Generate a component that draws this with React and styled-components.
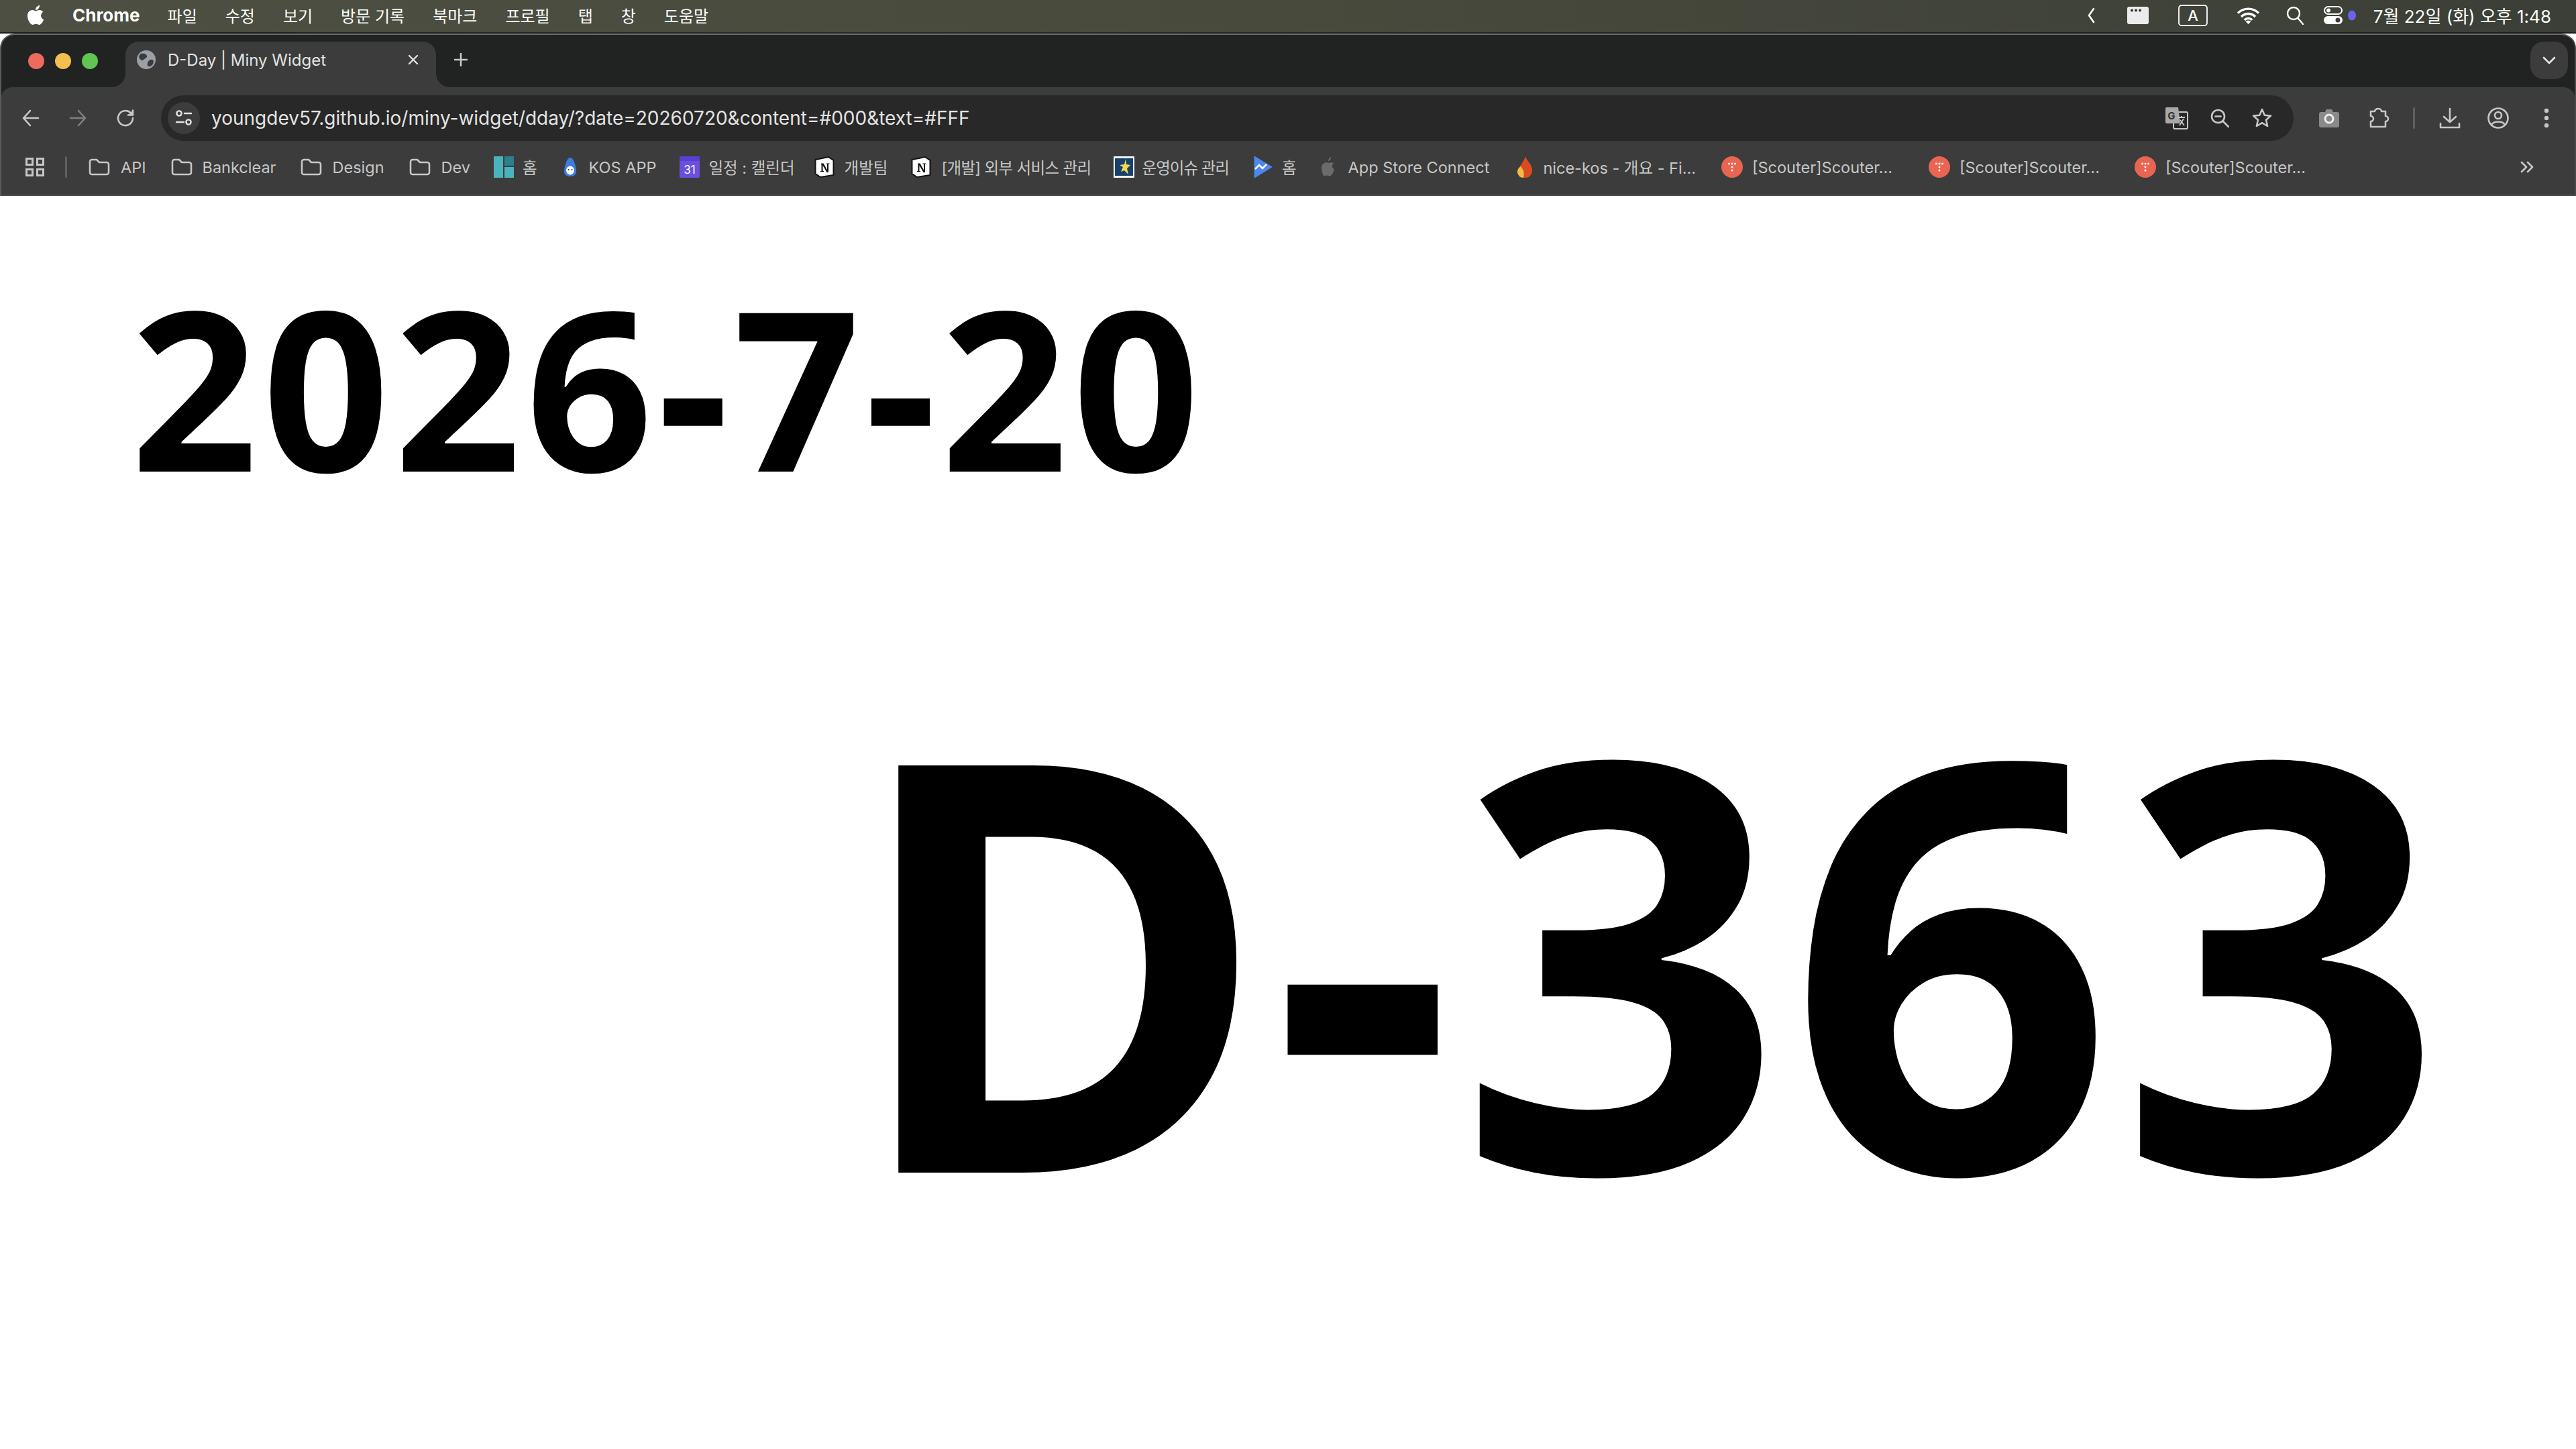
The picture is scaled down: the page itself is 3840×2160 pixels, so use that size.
import React from "react";
import styled, { createGlobalStyle } from "styled-components";
import { FaApple } from "react-icons/fa";

const Global = createGlobalStyle`
  html, body { margin: 0; padding: 0; background: #fff; }
  body { width: 3840px; height: 2160px; overflow: hidden; font-family: Inter, "Noto Sans CJK KR", sans-serif; }
`;
const UI = `Inter, "Noto Sans CJK KR", sans-serif`;

const Screen = styled.div`
  width: 3840px; height: 2160px; display: flex; flex-direction: column; overflow: hidden;
  background: linear-gradient(90deg, #1c1d18, #2a2a22 30%, #1d1c18);
`;
const MenuBar = styled.header`
  height: 48px; flex: none; display: flex; align-items: center; color: #fff; box-sizing: border-box;
  background: linear-gradient(90deg, #4c4f41 0%, #484a3c 50%, #3c3f37 100%);
  font: 400 24px ${UI}; padding: 0 37px 3px 39px;
`;
const AppleMark = styled.span`display: flex; width: 28px; margin-right: 41px; font-size: 33px; margin-top: -1px;`;
const AppName = styled.span`font-weight: 700; font-size: 26px; margin-right: 41px;`;
const MenuItem = styled.span`margin-right: 42px;`;
const Spacer = styled.div`flex: 1;`;
const Status = styled.span`display: flex; align-items: center; margin-left: ${p => p.$gap}px;`;
const Clock = styled.span`margin-left: 26px; font-size: 26px; white-space: nowrap;`;

const Browser = styled.div`
  flex: 1; margin-top: 2px; display: flex; flex-direction: column; min-height: 0; background: #fff;
`;
const Chrome = styled.div`
  flex: none; background: #202322; border-radius: 22px 22px 0 0; overflow: hidden;
  border-top: 2px solid #6a6c6b; border-left: 2px solid #5a5a5a; border-right: 2px solid #4a4a4a;
`;
const TabStrip = styled.div`height: 78px; display: flex; align-items: flex-end; padding-left: 40px; padding-right: 10px;`;
const Lights = styled.div`display: flex; gap: 16px; align-self: flex-start; margin-top: 27px;`;
const Light = styled.i`display: block; width: 24px; height: 24px; border-radius: 50%; background: ${p => p.$c};`;
const Tab = styled.div`
  margin-left: 41px; width: 463px; height: 68px; background: #3c3c3c; border-radius: 20px 20px 0 0;
  display: flex; align-items: center; padding: 0 26px 14px 17px; box-sizing: border-box; color: #e3e3e3;
  position: relative; font: 400 24px ${UI};
  &::before, &::after { content: ""; position: absolute; bottom: 0; width: 20px; height: 20px; }
  &::before { left: -20px; background: radial-gradient(circle at 0 0, #202322 19.5px, #3c3c3c 20px); }
  &::after { right: -20px; background: radial-gradient(circle at 100% 0, #202322 19.5px, #3c3c3c 20px); }
`;
const TabTitle = styled.span`margin-left: 18px; flex: 1; white-space: nowrap;`;
const NewTab = styled.span`display: flex; margin-left: 27px; align-self: flex-start; margin-top: 27px;`;
const TabMenu = styled.div`
  width: 56px; height: 56px; border-radius: 20px; background: #3c3c3c; display: flex; align-items: center; justify-content: center;
  align-self: flex-start; margin-top: 10px;
`;

const Toolbar = styled.div`
  height: 80px; background: #3c3c3c; display: flex; align-items: flex-start; padding: 12px 0 0 30px; border-radius: 16px 16px 0 0; box-sizing: border-box;
`;
const NavIcon = styled.span`display: flex; width: ${p => p.$w || 28}px; height: 68px; align-items: center; justify-content: center; margin-left: ${p => p.$ml || 0}px; flex: none;`;
const Omnibox = styled.div`
  width: 3179px; height: 68px; flex: none; border-radius: 34px; background: #282828; display: flex; align-items: center; padding: 0 32px 0 10px; box-sizing: border-box; margin-left: 39px;
`;
const SiteChip = styled.span`width: 48px; height: 48px; border-radius: 50%; background: #3c3c3c; display: flex; align-items: center; justify-content: center; flex: none;`;
const Url = styled.span`margin-left: 17px; font: 400 28px ${UI}; color: #e3e3e3; white-space: nowrap; flex: 1;`;
const OmniIcon = styled.span`display: flex; margin-left: ${p => p.$ml || 0}px;`;
const Divider = styled.i`display: block; width: 3px; height: 32px; background: #5f5f5f; border-radius: 2px; flex: none; margin-left: ${p => p.$ml}px; margin-right: ${p => p.$mr}px; align-self: center;`;

const BookmarkBar = styled.nav`
  height: 82px; background: #3c3c3c; border-bottom: 2px solid #4a4a4a; box-sizing: border-box; display: flex; align-items: center; padding: 0 0 2px 36px;
  color: #c7c7c7; font: 400 23.5px ${UI};
`;
const Bookmark = styled.span`display: flex; align-items: center; gap: ${p => p.$gap || 14}px; margin-right: ${p => p.$mr || 0}px; white-space: nowrap; flex: none;`;
const Label = styled.span`letter-spacing: ${p => p.$ls || 0}px;`;
const Fav = styled.span`display: flex; width: ${p => p.$w || 30}px; justify-content: center; flex: none; margin-right: ${p => p.$mr || 0}px;`;

const Page = styled.main`
  flex: 1; background: #fff; color: #000; display: flex; flex-direction: column; min-height: 0;
  font-family: "Noto Sans", sans-serif; font-weight: 700; padding: 0 190px 0 195px;
`;
const DateLine = styled.div`font-size: 331px; line-height: 1; margin-top: 117px; letter-spacing: 7px; white-space: nowrap;`;
const Dday = styled.div`font-size: 850px; line-height: 1; margin-top: 253px; letter-spacing: 6px; text-align: right; white-space: nowrap;`;

const S = ({ w, h, vb, children, sw = 2.6, c = "currentColor", fill = "none" }) => (
  <svg width={w} height={h} viewBox={vb || `0 0 ${w} ${h}`} fill={fill} stroke={c} strokeWidth={sw} strokeLinecap="round" strokeLinejoin="round">{children}</svg>
);

const Folder = () => (
  <S w={32} h={26} c="#c7c7c7"><path d="M2 5a3 3 0 0 1 3-3h7l4 4h11a3 3 0 0 1 3 3v12a3 3 0 0 1-3 3H5a3 3 0 0 1-3-3z" /></S>
);
const Scouter = () => (
  <svg width="32" height="32" viewBox="0 0 32 32"><circle cx="16" cy="16" r="16" fill="#ea6551" /><g fill="#fff"><circle cx="11.5" cy="11" r="1.5" /><circle cx="16" cy="11" r="1.5" /><circle cx="20.5" cy="11" r="1.5" /><circle cx="16" cy="16" r="1.5" /><circle cx="16" cy="21" r="1.5" /></g></svg>
);
const Notion = () => (
  <svg width="30" height="32" viewBox="0 0 30 32"><path d="M1.500 5 L21 1 L28.500 6 V28 L9 31 L1.500 26 Z" fill="#fff" stroke="#111" strokeWidth="2" /><path d="M10 10.500h3.500l5.500 10v-9h-1.500v-1h5v1H21V24h-2.500l-6-10.500V22h1.500v1H9v-1h1.500V11.500H10z" fill="#111" /></svg>
);

const bookmarks = [
  { icon: <Folder />, w: 32, label: "API", gap: 16, mr: 37 },
  { icon: <Folder />, w: 32, label: "Bankclear", gap: 15, mr: 37 },
  { icon: <Folder />, w: 32, label: "Design", gap: 15, mr: 37 },
  { icon: <Folder />, w: 32, label: "Dev", gap: 16, mr: 35 },
  { icon: <svg width="30" height="32" viewBox="0 0 30 32"><rect width="14" height="32" fill="#4ab3bd" /><rect x="16" width="14" height="14" fill="#2e7f8c" /><rect x="16" y="16" width="14" height="16" fill="#4ab3bd" /></svg>, label: "홈", gap: 13, mr: 39 },
  { icon: <svg width="20" height="30" viewBox="0 0 20 30"><path d="M10 1C5 1 2 12 1 20c-.6 6 3 9 9 9s9.600-3 9-9C18 12 15 1 10 1z" fill="#3d7de0" /><ellipse cx="10" cy="20" rx="6" ry="6.500" fill="#fff" /><circle cx="7.500" cy="19" r="1" fill="#222" /><circle cx="12.500" cy="19" r="1" fill="#222" /></svg>, w: 20, label: "KOS APP", gap: 18, mr: 35 },
  { icon: <svg width="30" height="32" viewBox="0 0 30 32"><rect width="30" height="32" rx="2" fill="#6a4fe0" /><rect y="0" width="30" height="7" fill="#5a3fd0" /><text x="15" y="26" textAnchor="middle" fontSize="17" fill="#fff" fontFamily="Inter">31</text></svg>, label: "일정 : 캘린더", gap: 13, mr: 29 },
  { icon: <Notion />, label: "개발팀", gap: 15, mr: 35 },
  { icon: <Notion />, label: "[개발] 외부 서비스 관리", gap: 15, mr: 33, ls: -0.6 },
  { icon: <svg width="31" height="32" viewBox="0 0 31 32"><rect width="31" height="32" fill="#eef2f5" /><rect x="2" y="3" width="27" height="26" fill="#17406c" /><path d="M18 4l1 8 6 1-5 5 2 9-6-6-5 2 3-7-5-3 7-1z" fill="#f4d94e" /></svg>, w: 31, label: "운영이슈 관리", gap: 12, mr: 37, ls: -1 },
  { icon: <svg width="28" height="32" viewBox="0 0 28 32"><path d="M1 0 L27 16 L1 32 Z" fill="#4d86ee" stroke="#4d86ee" strokeWidth="1" strokeLinejoin="round" /><path d="M2 19l6-6 5 5 6-6" fill="none" stroke="#fff" strokeWidth="2.500" /></svg>, w: 28, label: "홈", gap: 14, mr: 37 },
  { icon: <svg width="22" height="30" viewBox="0 0 22 30"><path d="M14 0c0 4-2 6-4 6.500C10 3 12 .8 14 0zM11 9c2-1 5-1.500 7 .5-3 2.500-3 7 1 9-1 4-4 10-7 10-2 0-2-1-4-1s-2 1-4 1C2 28 0 21 0 16c0-7 7-9 11-7z" fill="#6b6b6b" /></svg>, w: 22, label: "App Store Connect", gap: 18, mr: 40 },
  { icon: <svg width="26" height="32" viewBox="0 0 26 32"><path d="M14 0c1 6 10 11 10 21 0 6-4 11-10 11S3 28 3 22c0-6 8-12 11-22z" fill="#dc4a22" /><path d="M7 15c3 4 6 8 4 17-5 0-8-3-9-8-.500-4 2-7 5-9z" fill="#f5b942" /></svg>, w: 26, label: "nice-kos - 개요 - Fi...", gap: 14, mr: 38 },
  { icon: <Scouter />, w: 32, label: "[Scouter]Scouter...", gap: 14, mr: 54 },
  { icon: <Scouter />, w: 32, label: "[Scouter]Scouter...", gap: 14, mr: 52 },
  { icon: <Scouter />, w: 32, label: "[Scouter]Scouter...", gap: 14, mr: 0 },
];

export default function App() {
  return (
    <Screen>
      <Global />
      <MenuBar>
        <AppleMark><FaApple /></AppleMark>
        <AppName>Chrome</AppName>
        {["파일", "수정", "보기", "방문 기록", "북마크", "프로필", "탭", "창", "도움말"].map(m => <MenuItem key={m}>{m}</MenuItem>)}
        <Spacer />
        <Status><S w={12} h={24} sw={2.6} c="#fff"><path d="M10 2 3 12l7 10" /></S></Status>
        <Status $gap={48}><svg width="32" height="26" viewBox="0 0 32 26"><rect width="32" height="26" rx="3" fill="#ececec" /><g fill="#333"><circle cx="7" cy="5.500" r="2" /><circle cx="13" cy="5.500" r="2" /><circle cx="19" cy="5.500" r="2" /></g></svg></Status>
        <Status $gap={44}><svg width="44" height="32" viewBox="0 0 44 32"><rect x="1" y="1" width="42" height="30" rx="4" fill="none" stroke="#fff" strokeWidth="1.800" /><text x="22" y="24" textAnchor="middle" fontSize="22" fontWeight="500" fill="#fff" fontFamily="Inter">A</text></svg></Status>
        <Status $gap={43}><svg width="35" height="26" viewBox="0 0 35 26"><path d="M2 9.500a22 22 0 0 1 31 0M7 15a14.500 14.500 0 0 1 21 0M12 20a7 7 0 0 1 11 0" fill="none" stroke="#fff" strokeWidth="3.400" /><path d="M17.500 26l-4-4a6 6 0 0 1 8 0z" fill="#fff" /></svg></Status>
        <Status $gap={39}><S w={26} h={28} c="#fff" sw={2.400}><circle cx="11" cy="11" r="9" /><path d="M17.500 18 25 27" /></S></Status>
        <Status $gap={30}><svg width="28" height="28" viewBox="0 0 28 28"><rect x="1" y="1" width="26" height="11" rx="5.500" fill="none" stroke="#fff" strokeWidth="2" /><circle cx="7" cy="6.500" r="3" fill="#fff" /><rect x="0" y="15" width="28" height="12" rx="6" fill="#fff" /><circle cx="21" cy="21" r="3.500" fill="#3c3f37" /></svg></Status>
        <Status $gap={8}><svg width="12" height="16" viewBox="0 0 12 16"><ellipse cx="6" cy="8" rx="6" ry="7.500" fill="#6a62f0" /></svg></Status>
        <Clock>7월 22일 (화) 오후 1:48</Clock>
      </MenuBar>
      <Browser>
        <Chrome>
          <TabStrip>
            <Lights>
              <Light $c="#ed6a5e" /><Light $c="#f4bf4f" /><Light $c="#61c554" />
            </Lights>
            <Tab>
              <svg width="28" height="28" viewBox="0 0 28 28"><circle cx="14" cy="14" r="14" fill="#9aa0a6" /><path d="M6 5c4-1 8 0 9 3s-3 4-5 6-4 1-6-2 0-5 2-7zM20 14c3-1 5 0 5 3s-3 7-6 7-4-2-3-5 2-4 4-5z" fill="#3c3c3c" /></svg>
              <TabTitle>D-Day | Miny Widget</TabTitle>
              <S w={16} h={16} c="#e3e3e3" sw={2.4}><path d="M2 2l12 12M14 2 2 14" /></S>
            </Tab>
            <NewTab><S w={20} h={20} c="#c7c7c7" sw={2.6}><path d="M10 1v18M1 10h18" /></S></NewTab>
            <Spacer />
            <TabMenu><S w={20} h={12} c="#e3e3e3" sw={2.6}><path d="M2 2l8 8 8-8" /></S></TabMenu>
          </TabStrip>
          <Toolbar>
            <NavIcon><S w={26} h={26} c="#c7c7c7"><path d="M24 13H2M12 2 2 13l10 11" /></S></NavIcon>
            <NavIcon $ml={42}><S w={26} h={26} c="#7f7f7f"><path d="M2 13h22M14 2l10 11-10 11" /></S></NavIcon>
            <NavIcon $ml={43}><S w={26} h={26} c="#c7c7c7"><path d="M24 13a11 11 0 1 1-3.500-8L24 8" /><path d="M24 1.500V8.500h-7" fill="#c7c7c7" /></S></NavIcon>
            <Omnibox>
              <SiteChip><svg width="26" height="26" viewBox="0 0 26 26" fill="none" stroke="#e3e3e3" strokeWidth="2.400" strokeLinecap="round"><circle cx="6" cy="6" r="3.600" /><path d="M14 6h10M2 19h11" /><circle cx="20" cy="19" r="3.600" /></svg></SiteChip>
              <Url>youngdev57.github.io/miny-widget/dday/?date=20260720&amp;content=#000&amp;text=#FFF</Url>
              <OmniIcon><svg width="34" height="34" viewBox="0 0 34 34"><rect x="12" y="8" width="21" height="25" rx="2" fill="none" stroke="#c7c7c7" strokeWidth="2" /><path d="M2 1h17l3 24H2a2 2 0 0 1-2-2V3a2 2 0 0 1 2-2z" fill="#a9a9a9" /><text x="9" y="19" textAnchor="middle" fontSize="15" fontWeight="700" fill="#333" fontFamily="Inter">G</text><path d="M19 16h10M24 14v2M21 28l6-10M22 20l6 8" stroke="#c7c7c7" strokeWidth="1.800" fill="none" /></svg></OmniIcon>
              <OmniIcon $ml={33}><S w={28} h={28} c="#c7c7c7"><circle cx="11.500" cy="11.500" r="9.500" /><path d="M18.500 18.500 27 27M7.500 11.500h8" /></S></OmniIcon>
              <OmniIcon $ml={34}><S w={30} h={30} c="#c7c7c7"><path d="M15 2l3.800 8.700 9.200.9-7 6.200 2.100 9.200-8.100-4.900L6.900 27l2.100-9.200-7-6.200 9.200-.9z" /></S></OmniIcon>
            </Omnibox>
            <NavIcon $ml={38} $w={30}><svg width="30" height="28" viewBox="0 0 30 28"><path d="M3 5h6l2-4h8l2 4h6a3 3 0 0 1 3 3v17a3 3 0 0 1-3 3H3a3 3 0 0 1-3-3V8a3 3 0 0 1 3-3z" fill="#8a8a8a" /><circle cx="15" cy="15" r="6" fill="none" stroke="#eee" strokeWidth="3" /></svg></NavIcon>
            <NavIcon $ml={43} $w={32}><S w={32} h={32} c="#c7c7c7"><path d="M4 6h6a5 4 0 0 1 10 0h6v7a4 4 0 0 1 0 8v8H4v-8a4 4 0 0 0 0-8z" /></S></NavIcon>
            <Divider $ml={35} $mr={36} />
            <NavIcon $w={32}><S w={32} h={32} c="#c7c7c7"><path d="M16 2v20M7 14l9 8 9-8M2 24v6h28v-6" /></S></NavIcon>
            <NavIcon $ml={40} $w={32}><S w={32} h={32} c="#c7c7c7"><circle cx="16" cy="16" r="14.500" /><circle cx="16" cy="12" r="5" /><path d="M6 26c3-6 17-6 20 0" /></S></NavIcon>
            <NavIcon $ml={52} $w={8}><svg width="8" height="30" viewBox="0 0 8 30"><g fill="#c7c7c7"><circle cx="4" cy="4" r="3.200" /><circle cx="4" cy="15" r="3.200" /><circle cx="4" cy="26" r="3.200" /></g></svg></NavIcon>
          </Toolbar>
          <BookmarkBar>
            <Fav $w={28}><svg width="28" height="28" viewBox="0 0 28 28" fill="none" stroke="#c7c7c7" strokeWidth="3"><rect x="1.500" y="1.500" width="9" height="9" /><rect x="17.500" y="1.500" width="9" height="9" /><rect x="1.500" y="17.500" width="9" height="9" /><rect x="17.500" y="17.500" width="9" height="9" /></svg></Fav>
            <Divider $ml={31} $mr={32} />
            {bookmarks.map((b, i) => (
              <Bookmark key={i} $gap={b.gap} $mr={b.mr}><Fav $w={b.w}>{b.icon}</Fav><Label $ls={b.ls}>{b.label}</Label></Bookmark>
            ))}
            <Spacer />
            <Fav $w={22} $mr={60}><S w={22} h={18} c="#c7c7c7"><path d="M3 2l7 7-7 7M12 2l7 7-7 7" /></S></Fav>
          </BookmarkBar>
        </Chrome>
        <Page>
          <DateLine>2026-7-20</DateLine>
          <Dday>D-363</Dday>
        </Page>
      </Browser>
    </Screen>
  );
}
